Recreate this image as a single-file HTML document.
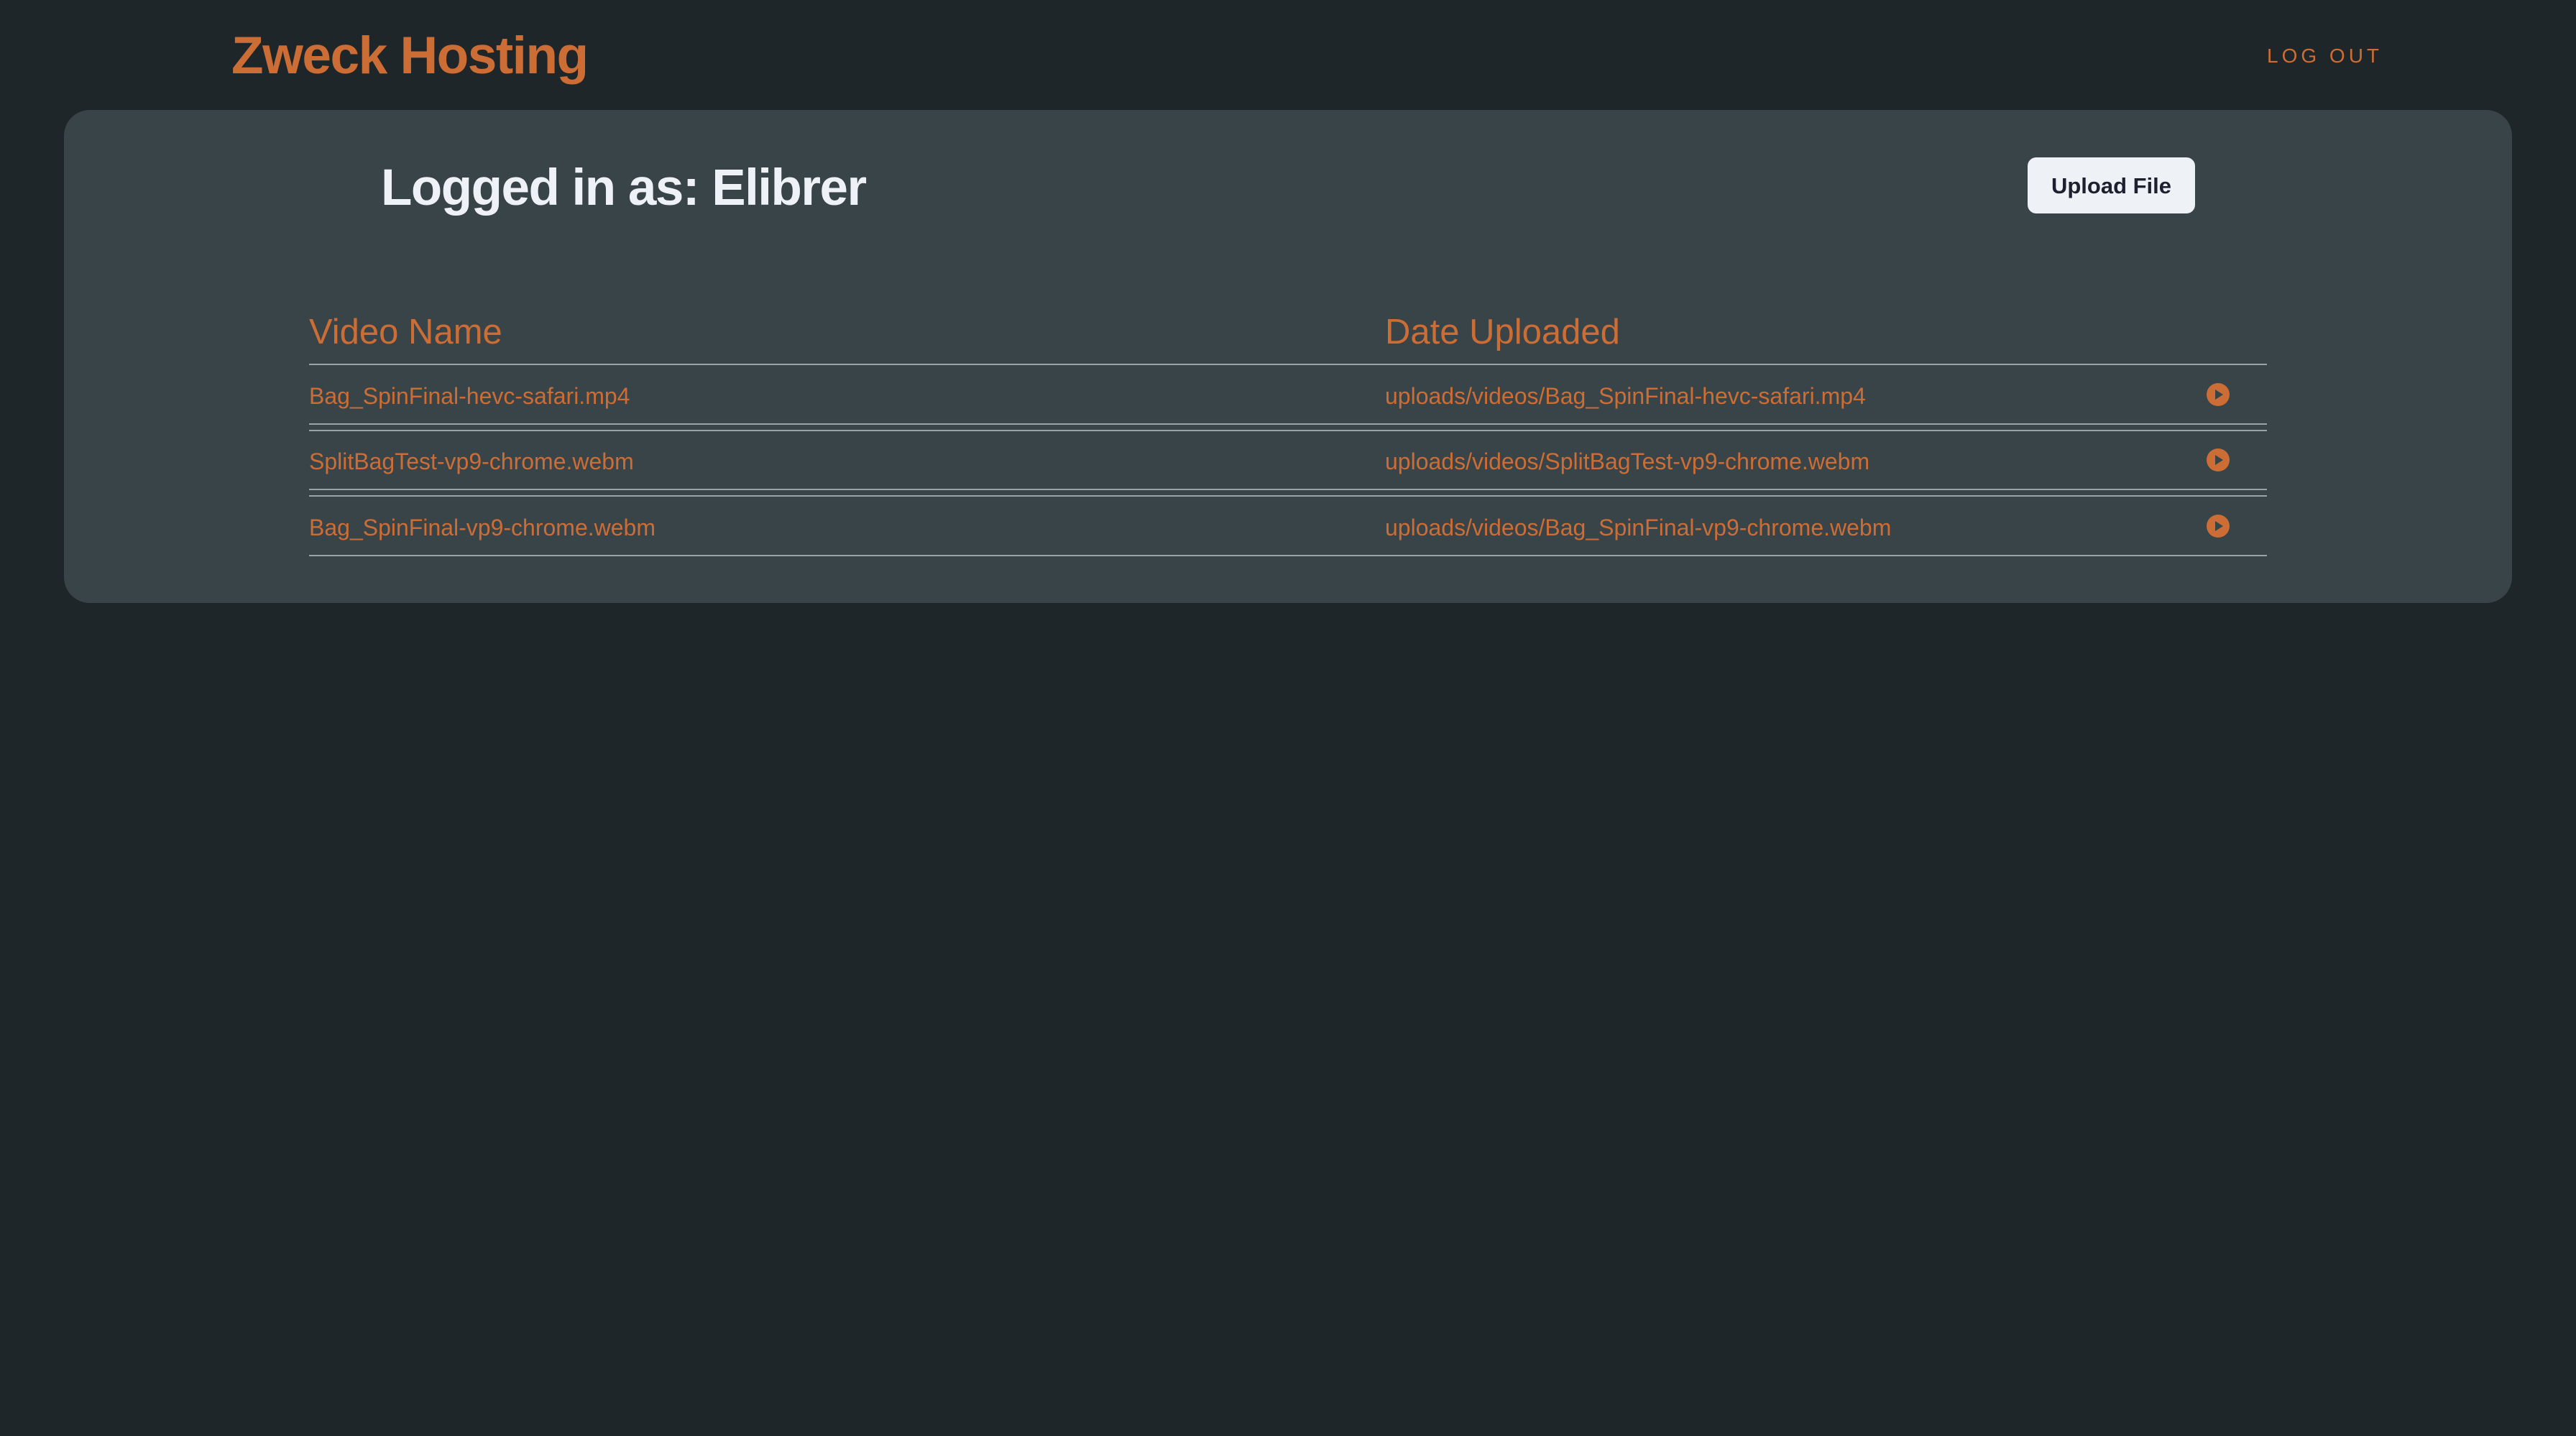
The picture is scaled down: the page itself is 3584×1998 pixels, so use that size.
<!DOCTYPE html>
<html><head><meta charset="utf-8"><style>
*{margin:0;padding:0;box-sizing:border-box}
html,body{width:3584px;height:1998px;background:#1f2629;overflow:hidden;font-family:"Liberation Sans",sans-serif;position:relative}
.abs{position:absolute;white-space:nowrap}
.title{left:322px;top:35px;font-size:73px;font-weight:bold;color:#cc6d35;letter-spacing:-1.5px;line-height:86px}
.logout{left:3154px;top:62px;font-size:28px;color:#cc6d35;letter-spacing:5px;line-height:32px}
.card{left:89px;top:153px;width:3406px;height:686px;background:#394449;border-radius:36px}
.logged{left:530px;top:222px;font-size:71px;font-weight:bold;color:#eef2f6;letter-spacing:-1.5px;line-height:80px}
.btn{left:2821px;top:219px;width:233px;height:78px;background:#eef2f6;border-radius:12px;color:#1e2030;font-size:31px;font-weight:bold;text-align:center;line-height:80px}
.th{font-size:49px;color:#cc6d35;line-height:56px;top:434px}
.line{position:absolute;left:430px;width:2724px;height:2px;background:#9aa3a8}
.td{font-size:32px;color:#cc6d35;line-height:36px}
.play{position:absolute;left:3070px;width:32px;height:32px;border-radius:50%;background:#cc6d35}
.play:after{content:"";position:absolute;left:12px;top:9px;border-left:11px solid #394449;border-top:7px solid transparent;border-bottom:7px solid transparent}
</style></head><body>
<div class="abs title">Zweck Hosting</div>
<div class="abs logout">LOG OUT</div>
<div class="abs card"></div>
<div class="abs logged">Logged in as: Elibrer</div>
<div class="abs btn">Upload File</div>
<div class="abs th" style="left:430px">Video Name</div>
<div class="abs th" style="left:1927px">Date Uploaded</div>
<div class="line" style="top:506px"></div>
<div class="abs td" style="left:430px;top:533px">Bag_SpinFinal-hevc-safari.mp4</div>
<div class="abs td" style="left:1927px;top:533px">uploads/videos/Bag_SpinFinal-hevc-safari.mp4</div>
<div class="play" style="top:533px"></div>
<div class="line" style="top:589px"></div>
<div class="line" style="top:598px"></div>
<div class="abs td" style="left:430px;top:624px">SplitBagTest-vp9-chrome.webm</div>
<div class="abs td" style="left:1927px;top:624px">uploads/videos/SplitBagTest-vp9-chrome.webm</div>
<div class="play" style="top:624px"></div>
<div class="line" style="top:680px"></div>
<div class="line" style="top:689px"></div>
<div class="abs td" style="left:430px;top:716px">Bag_SpinFinal-vp9-chrome.webm</div>
<div class="abs td" style="left:1927px;top:716px">uploads/videos/Bag_SpinFinal-vp9-chrome.webm</div>
<div class="play" style="top:716px"></div>
<div class="line" style="top:772px"></div>
</body></html>
